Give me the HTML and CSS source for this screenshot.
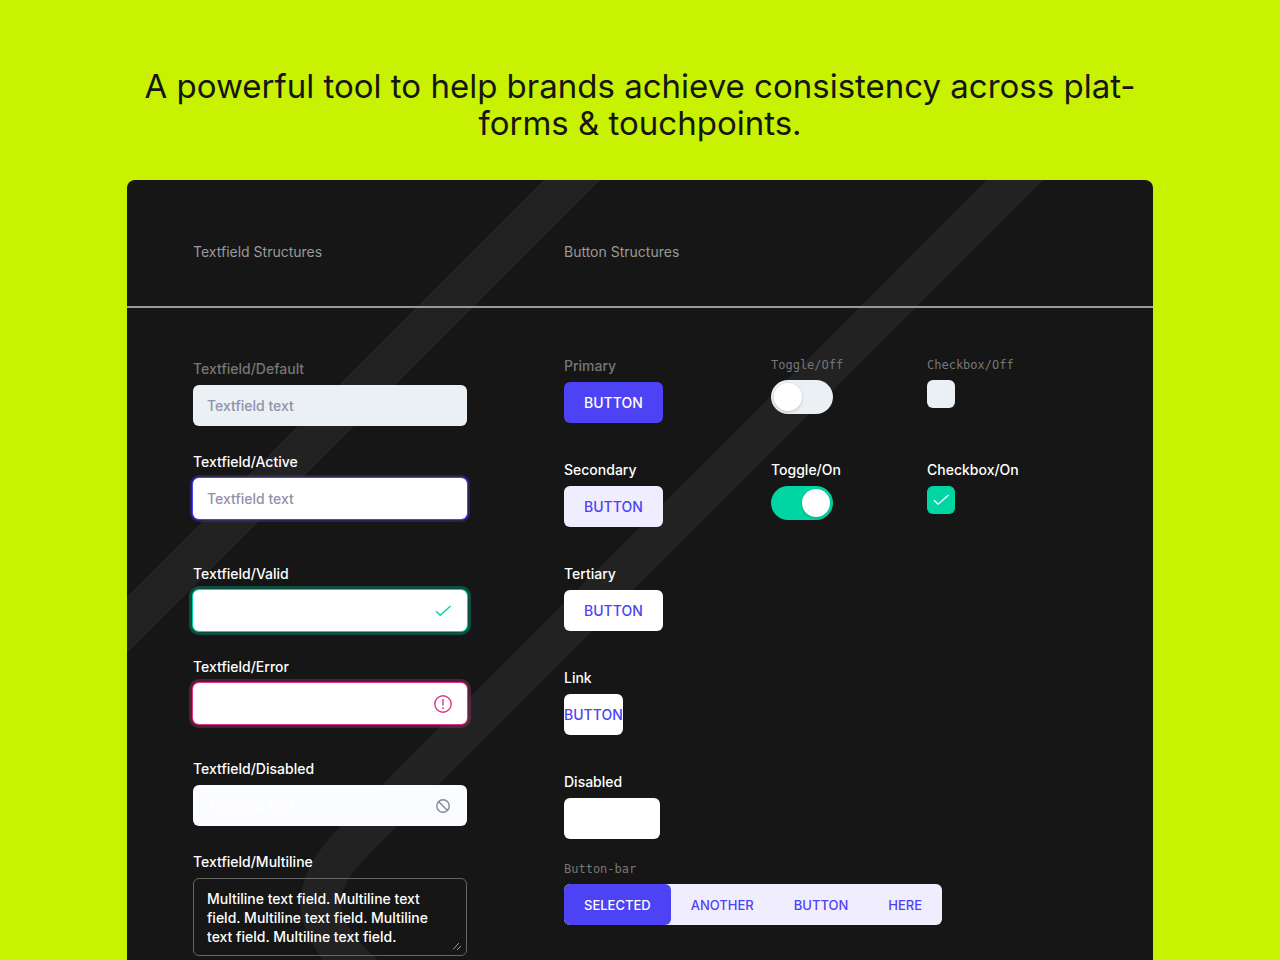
FILE: index.html
```html
<!DOCTYPE html>
<html lang="en">
  <head>
    <meta charset="UTF-8">
    <meta name="viewport" content="width=device-width, initial-scale=1">
    <title>Design system</title>
    <link rel="stylesheet" href="styles.css">
  </head>
  <body>
    <h1 class="headline">A powerful tool to help brands achieve consistency across plat-<br>forms &amp; touchpoints.</h1>

    <main class="panel">
      <svg class="stripes" aria-hidden="true">
        <path d="M465 -20 L-40 485"/>
        <path d="M908 -20 L228 660 C182 706 182 740 228 786 L260 818"/>
      </svg>

      <div class="panel-head columns">
        <h2>Textfield Structures</h2>
        <h2>Button Structures</h2>
      </div>

      <div class="panel-body columns">
        <form class="fields">
          <div class="group">
            <label class="muted" for="tf-default">Textfield/Default</label>
            <input class="field field-default" id="tf-default" type="text" placeholder="Textfield text">
          </div>
          <div class="group">
            <label for="tf-active">Textfield/Active</label>
            <input class="field field-active" id="tf-active" type="text" placeholder="Textfield text">
          </div>
          <div class="group group-far">
            <label for="tf-valid">Textfield/Valid</label>
            <div class="field-wrap">
              <input class="field field-valid" id="tf-valid" type="text">
              <svg class="field-icon icon-valid" viewBox="0 0 18 18"><path d="M2 9.3l4.2 3.9L16.5 4"/></svg>
            </div>
          </div>
          <div class="group">
            <label for="tf-error">Textfield/Error</label>
            <div class="field-wrap">
              <input class="field field-error" id="tf-error" type="text">
              <svg class="field-icon icon-error" viewBox="0 0 18 18"><circle cx="9" cy="9" r="8.2"/><path d="M9 4v6.6M9 12.3v1.6"/></svg>
            </div>
          </div>
          <div class="group group-mid">
            <label for="tf-disabled">Textfield/Disabled</label>
            <div class="field-wrap">
              <input class="field field-disabled" id="tf-disabled" type="text" value="Textfield text" disabled>
              <svg class="field-icon icon-disabled" viewBox="0 0 18 18"><circle cx="9" cy="9" r="6.2"/><path d="M4.7 4.7l8.6 8.6"/></svg>
            </div>
          </div>
          <div class="group">
            <label for="tf-multi">Textfield/Multiline</label>
            <div class="field-wrap">
              <textarea class="multiline" id="tf-multi" rows="3">Multiline text field. Multiline text field. Multiline text field. Multiline text field. Multiline text field.</textarea>
              <svg class="grip" viewBox="0 0 10 10"><path d="M1 8.5L7 2M5 9L9 5"/></svg>
            </div>
          </div>
        </form>

        <div class="controls">
          <div class="control-grid">
            <div class="group">
              <span class="muted">Primary</span>
              <button class="btn btn-primary" type="button">BUTTON</button>
            </div>
            <div class="group">
              <label class="mono" for="toggle-off">Toggle/Off</label>
              <input class="toggle" id="toggle-off" type="checkbox" role="switch">
            </div>
            <div class="group">
              <label class="mono" for="check-off">Checkbox/Off</label>
              <input class="check" id="check-off" type="checkbox">
            </div>

            <div class="group">
              <span>Secondary</span>
              <button class="btn btn-secondary" type="button">BUTTON</button>
            </div>
            <div class="group">
              <label for="toggle-on">Toggle/On</label>
              <input class="toggle" id="toggle-on" type="checkbox" role="switch" checked>
            </div>
            <div class="group">
              <label for="check-on">Checkbox/On</label>
              <div class="check-wrap">
                <input class="check" id="check-on" type="checkbox" checked>
                <svg class="check-icon" viewBox="0 0 18 18"><path d="M2 9.3l4.2 3.9L16.5 4"/></svg>
              </div>
            </div>

            <div class="group first-col">
              <span>Tertiary</span>
              <button class="btn btn-tertiary" type="button">BUTTON</button>
            </div>
            <div class="group first-col">
              <span>Link</span>
              <a class="btn btn-link" href="#">BUTTON</a>
            </div>
            <div class="group first-col">
              <span>Disabled</span>
              <button class="btn btn-disabled" type="button" aria-label="Disabled" disabled></button>
            </div>
          </div>

          <div class="group bar-group">
            <span class="mono">Button-bar</span>
            <div class="button-bar">
              <button class="selected" type="button">SELECTED</button>
              <button type="button">ANOTHER</button>
              <button type="button">BUTTON</button>
              <button type="button">HERE</button>
            </div>
          </div>
        </div>
      </div>
    </main>
  </body>
</html>
```

FILE: styles.css
```css
:root {
  --lime: #c9f202;
  --panel: #161616;
  --indigo: #4e42f5;
  --lilac: #f0eefe;
  --green: #00d5a4;
  --pink: #e0338c;
  --grey: #ebf0f5;
}
* {
  box-sizing: border-box;
}
body {
  display: flex;
  flex-direction: column;
  min-height: 100vh;
  margin: 0;
  background: var(--lime);
  color: #fff;
  font-family: "Inter", sans-serif;
  font-size: 14px;
  font-weight: 500;
  line-height: 20px;
}
input, textarea, button {
  font: inherit;
}
.headline {
  margin: 68px 0 38px;
  color: var(--panel);
  font-size: 33px;
  font-weight: 400;
  line-height: 37px;
  text-align: center;
}
.panel {
  position: relative;
  flex: 1;
  margin: 0 127px;
  overflow: hidden;
  background: var(--panel);
  border-radius: 8px 8px 0 0;
}
.stripes {
  position: absolute;
  top: 0;
  left: 0;
  width: 100%;
  height: 100%;
  fill: none;
  stroke: #222;
  stroke-width: 40px;
}
.columns {
  position: relative;
  display: grid;
  grid-template-columns: 274px 1fr;
  column-gap: 97px;
  padding: 0 66px;
}
.panel-head {
  padding-top: 62px;
  padding-bottom: 44px;
  border-bottom: 2px solid #999;
}
.panel-head h2 {
  margin: 0;
  color: #999;
  font-size: 14px;
  font-weight: 400;
  line-height: 20px;
}
.fields {
  display: flex;
  flex-direction: column;
  padding-top: 51px;
}
.group {
  display: flex;
  flex-direction: column;
  align-items: flex-start;
  gap: 6px;
}
.fields .group {
  align-items: stretch;
}
.fields .group + .group {
  margin-top: 26px;
}
.fields .group + .group-far {
  margin-top: 45px;
}
.fields .group + .group-mid {
  margin-top: 35px;
}
.muted {
  color: #777;
}
.mono {
  color: #777;
  font-family: "DejaVu Sans Mono", monospace;
  font-size: 12px;
  font-weight: 400;
  line-height: 18px;
}

/* text fields */
.field-wrap {
  position: relative;
  display: flex;
}
.field {
  width: 100%;
  height: 41px;
  padding: 0 14px;
  background: #fff;
  border: 0;
  border-radius: 6px;
  color: #222;
}
.field::placeholder {
  color: #9192a8;
}
.field-default {
  background: var(--grey);
}
.field-active {
  box-shadow: 0 0 0 1px var(--indigo), 0 0 0 3px rgba(78, 66, 245, 0.3);
}
.field-valid {
  box-shadow: 0 0 0 1px var(--green), 0 0 0 4px rgba(0, 213, 164, 0.3);
}
.field-error {
  box-shadow: 0 0 0 1px var(--pink), 0 0 0 4px rgba(224, 51, 140, 0.3);
}
.field-disabled {
  background: #fbfcff;
  color: #fff;
}
.field-icon {
  position: absolute;
  top: 12px;
  right: 15px;
  width: 18px;
  height: 18px;
  fill: none;
  stroke-width: 1.4;
}
.icon-valid {
  stroke: var(--green);
}
.icon-error {
  stroke: var(--pink);
}
.icon-disabled {
  stroke: #858699;
}
.multiline {
  width: 100%;
  height: 78px;
  padding: 10px 13px;
  overflow: hidden;
  background: transparent;
  border: 1px solid #666;
  border-radius: 6px;
  color: #fff;
  line-height: 19px;
  resize: none;
}
.grip {
  position: absolute;
  right: 5px;
  bottom: 5px;
  width: 10px;
  height: 10px;
  fill: none;
  stroke: #999;
}

/* buttons, toggles, checkboxes */
.controls {
  padding-top: 48px;
}
.control-grid {
  display: grid;
  grid-template-columns: 207px 156px 1fr;
  row-gap: 37px;
}
.first-col {
  grid-column: 1;
}
.btn {
  height: 41px;
  padding: 0 20px;
  border: 0;
  border-radius: 6px;
  color: var(--indigo);
  font-size: 14px;
  line-height: 41px;
  text-decoration: none;
}
.btn-primary {
  background: var(--indigo);
  color: #fff;
}
.btn-secondary {
  background: var(--lilac);
}
.btn-tertiary {
  background: #fff;
}
.btn-link {
  padding: 0;
  background: #fff;
}
.btn-disabled {
  width: 96px;
  background: #fff;
}
.toggle {
  appearance: none;
  display: flex;
  width: 62px;
  height: 34px;
  margin: 0;
  padding: 3px;
  background: var(--grey);
  border-radius: 17px;
}
.toggle::before {
  content: "";
  width: 28px;
  height: 28px;
  background: #fff;
  border-radius: 50%;
  box-shadow: 0 1px 3px rgba(0, 0, 0, 0.2);
}
.toggle:checked {
  justify-content: flex-end;
  background: var(--green);
}
.check {
  appearance: none;
  display: block;
  width: 28px;
  height: 28px;
  margin: 0;
  background: var(--grey);
  border-radius: 6px;
}
.check:checked {
  background: var(--green);
}
.check-wrap {
  position: relative;
}
.check-icon {
  position: absolute;
  top: 5px;
  left: 5px;
  width: 18px;
  height: 18px;
  fill: none;
  stroke: #fff;
  stroke-width: 1.3;
  pointer-events: none;
}
.bar-group {
  margin-top: 21px;
}
.button-bar {
  display: flex;
  overflow: hidden;
  background: var(--lilac);
  border-radius: 6px;
}
.button-bar button {
  height: 41px;
  padding: 0 20px;
  background: none;
  border: 0;
  color: var(--indigo);
  font-size: 13px;
}
.button-bar .selected {
  background: var(--indigo);
  border-radius: 0 6px 6px 0;
  color: #fff;
}
```
